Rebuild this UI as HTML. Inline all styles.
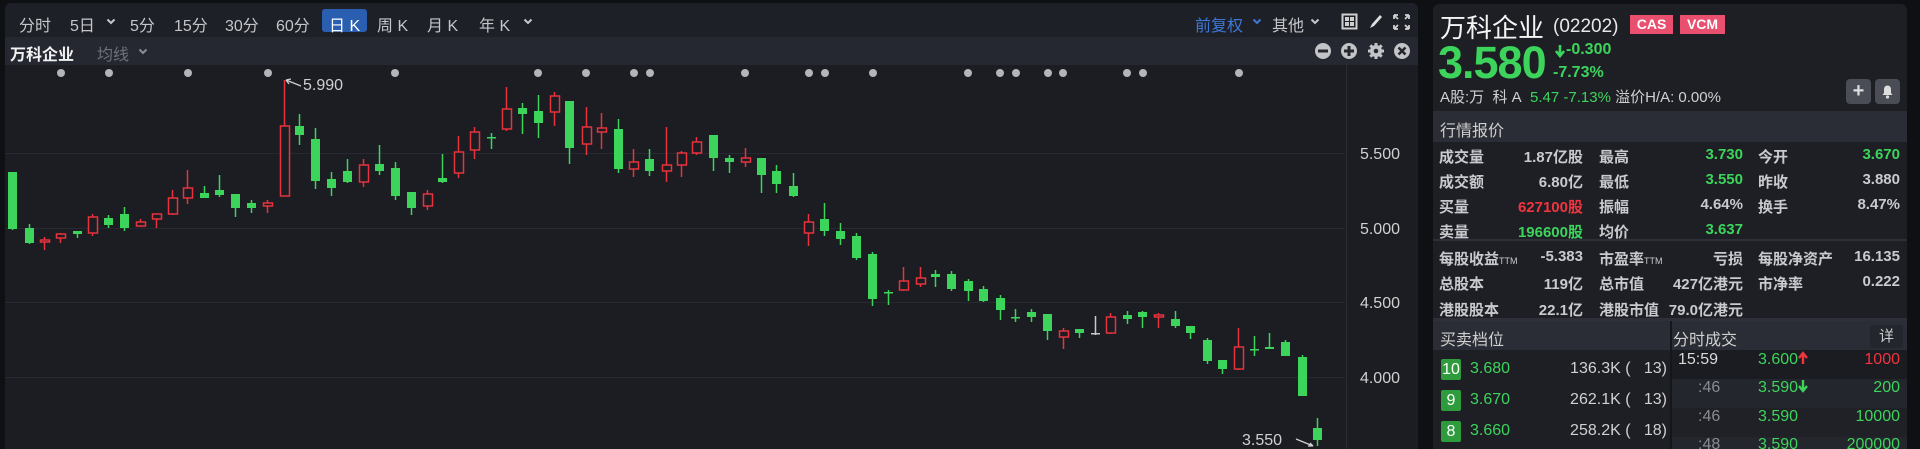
<!DOCTYPE html>
<html><head><meta charset="utf-8">
<style>
*{margin:0;padding:0;box-sizing:border-box}
body{width:1920px;height:449px;background:#0f1013;overflow:hidden;position:relative;font-family:"Liberation Sans","Noto Sans CJK SC",sans-serif;color:#c9cacd}
.a{position:absolute;white-space:nowrap}
.g{color:#3dd45c}.r{color:#f0353f}
#chart{position:absolute;left:5px;top:3px;width:1413px;height:446px;background:#1b1d23;border-radius:6px 6px 0 0;overflow:hidden}
#tb{position:absolute;left:0;top:0;width:1413px;height:34px;background:#1e2027}
#tb2{position:absolute;left:0;top:34px;width:1413px;height:28px;background:#252831}
.tbi{position:absolute;top:9px;font-size:16px;color:#c5c6ca}
.chev{position:absolute;top:15px}
#rp{position:absolute;left:1433px;top:4px;width:474px;height:445px;background:#1d1f25;border-radius:6px 6px 0 0;overflow:hidden}
.hdr{position:absolute;left:0;width:474px;background:#2a2d35}
.t{position:absolute;font-size:15px;font-weight:bold;white-space:nowrap}
.bd{position:absolute;width:20px;height:21px;background:#2e9c3c;color:#fff;font-size:16px;text-align:center;line-height:21px;border-radius:2px}
</style></head><body>
<div id="chart">
 <div id="tb">
  <span class="tbi" style="left:14px">分时</span>
  <span class="tbi" style="left:65px">5日</span><svg class="chev" style="left:101px" width="10" height="7"><path d="M1.5 1.5l3.5 3.5 3.5-3.5" stroke="#c5c6ca" stroke-width="2" fill="none"/></svg>
  <span class="tbi" style="left:125px">5分</span>
  <span class="tbi" style="left:169px">15分</span>
  <span class="tbi" style="left:220px">30分</span>
  <span class="tbi" style="left:271px">60分</span>
  <div class="a" style="left:317px;top:6px;width:45px;height:23px;background:#2a5eb0;border-radius:3px"></div>
  <span class="tbi" style="left:324px;color:#fff">日 K</span>
  <span class="tbi" style="left:372px">周 K</span>
  <span class="tbi" style="left:422px">月 K</span>
  <span class="tbi" style="left:474px">年 K</span><svg class="chev" style="left:518px" width="10" height="7"><path d="M1.5 1.5l3.5 3.5 3.5-3.5" stroke="#c5c6ca" stroke-width="2" fill="none"/></svg>
  <span class="tbi" style="left:1190px;color:#3d78d8">前复权</span><svg class="chev" style="left:1247px" width="10" height="7"><path d="M1.5 1.5l3.5 3.5 3.5-3.5" stroke="#3d78d8" stroke-width="2" fill="none"/></svg>
  <span class="tbi" style="left:1267px">其他</span><svg class="chev" style="left:1305px" width="10" height="7"><path d="M1.5 1.5l3.5 3.5 3.5-3.5" stroke="#c5c6ca" stroke-width="2" fill="none"/></svg>
  <svg class="a" style="left:1336px;top:10px" width="80" height="18" viewBox="0 0 80 18">
   <rect x="1.5" y="1.5" width="14" height="14" fill="none" stroke="#d0d0d0" stroke-width="2"/>
   <rect x="4" y="4" width="4" height="4" fill="#d0d0d0"/><rect x="9" y="4" width="4" height="4" fill="#d0d0d0"/><rect x="4" y="9" width="4" height="4" fill="#d0d0d0"/><rect x="9" y="9" width="4" height="4" fill="#d0d0d0"/>
   <path d="M29 15 L31 11 L39 2 L41 4 L33 13 Z" fill="#e0e0e0"/>
   <path d="M53 2h4M53 2v4M53 2l4 4M68 2h-4M68 2v4M68 2l-4 4M53 16h4M53 16v-4M53 16l4-4M68 16h-4M68 16v-4M68 16l-4-4" stroke="#d0d0d0" stroke-width="1.8" fill="none"/>
  </svg>
 </div>
 <div id="tb2">
  <span class="a" style="left:5px;top:4px;font-size:16px;font-weight:bold;color:#f2f2f2">万科企业</span>
  <span class="a" style="left:92px;top:4px;font-size:16px;color:#6f727a">均线</span><svg class="a" style="left:133px;top:11px" width="10" height="7"><path d="M1.5 1.5l3.5 3.5 3.5-3.5" stroke="#8a8d94" stroke-width="2" fill="none"/></svg>
  <svg class="a" style="left:1309px;top:4px" width="100" height="20" viewBox="0 0 100 20">
   <circle cx="9" cy="10" r="8" fill="#c3c4c8"/><rect x="4" y="8.5" width="10" height="3" fill="#252831"/>
   <circle cx="35" cy="10" r="8" fill="#c3c4c8"/><rect x="30" y="8.5" width="10" height="3" fill="#252831"/><rect x="33.5" y="5" width="3" height="10" fill="#252831"/>
   <g fill="#c3c4c8"><circle cx="62" cy="10" r="6"/><g stroke="#c3c4c8" stroke-width="3"><path d="M62 2v16M54 10h16M56.3 4.3l11.4 11.4M67.7 4.3l-11.4 11.4"/></g></g><circle cx="62" cy="10" r="2.3" fill="#252831"/>
   <circle cx="88" cy="10" r="8" fill="#c3c4c8"/><path d="M84.5 6.5l7 7M91.5 6.5l-7 7" stroke="#252831" stroke-width="2.6"/>
  </svg>
 </div>
 <svg id="cs" class="a" style="left:-5px;top:-3px" width="1413" height="452"></svg>
</div>
<div id="rp">
 <span class="a" style="left:7px;top:4px;font-size:26px;color:#f4f4f4">万科企业</span>
 <span class="a" style="left:120px;top:12px;font-size:19px;color:#e8e8e8">(02202)</span>
 <div class="a" style="left:197px;top:11px;width:43px;height:19px;background:#e94f6f;color:#fff;font-size:14px;font-weight:bold;text-align:center;line-height:19px">CAS</div>
 <div class="a" style="left:247px;top:11px;width:45px;height:19px;background:#e94f6f;color:#fff;font-size:14px;font-weight:bold;text-align:center;line-height:19px">VCM</div>
 <span class="a g" style="left:5px;top:33px;font-size:45px;font-weight:bold;letter-spacing:-1px">3.580</span>
 <svg class="a" style="left:122px;top:40px" width="10" height="14"><path d="M5 1v9M1 7l4 5 4-5" stroke="#3dd45c" stroke-width="2.6" fill="none"/></svg>
 <span class="a g" style="left:133px;top:37px;font-size:16px;font-weight:bold">-0.300</span>
 <span class="a g" style="left:120px;top:60px;font-size:16px;font-weight:bold">-7.73%</span>
 <span class="a" style="left:7px;top:82px;font-size:15px;color:#d0d0d0">A股:万&nbsp; 科 A&nbsp; <span class="g">5.47 -7.13%</span> 溢价H/A: 0.00%</span>
 <div class="a" style="left:413px;top:75px;width:25px;height:25px;background:#4a4d55;border-radius:4px;color:#ddd;font-size:20px;font-weight:bold;text-align:center;line-height:24px">+</div>
 <div class="a" style="left:442px;top:75px;width:25px;height:25px;background:#4a4d55;border-radius:4px"><svg width="25" height="25"><path d="M7.5 16h10l-1.5-2v-4a3.5 3.5 0 0 0-7 0v4z" fill="#ddd"/><circle cx="12.5" cy="18" r="1.6" fill="#ddd"/></svg></div>
 <div class="hdr" style="top:107px;height:31px"></div>
 <span class="a" style="left:7px;top:113px;font-size:16px;color:#cfcfcf">行情报价</span>
 <div class="a" style="left:0;top:235px;width:474px;height:2px;background:#2d3038"></div>
 <div class="a" style="left:0;top:314px;width:474px;height:3px;background:#2d3038"></div>
 <div id="tbl"></div>
 <div class="hdr" style="top:317px;height:29px"></div>
 <div class="a" style="left:237px;top:317px;width:2px;height:130px;background:#15161a"></div>
 <span class="a" style="left:7px;top:322px;font-size:16px;color:#cfcfcf">买卖档位</span>
 <span class="a" style="left:240px;top:322px;font-size:16px;color:#cfcfcf">分时成交</span>
 <div class="a" style="left:437px;top:321px;width:33px;height:23px;background:#23262d;border-radius:3px;color:#ccc;font-size:15px;text-align:center;line-height:23px">详</div>
 <div class="a" style="left:239px;top:346px;width:235px;height:29px;background:#1a1c21"></div>
 <div class="a" style="left:239px;top:375px;width:235px;height:29px;background:#23262c"></div>
 <div class="a" style="left:239px;top:404px;width:235px;height:29px;background:#1f2127"></div>
 <div class="a" style="left:239px;top:433px;width:235px;height:29px;background:#23262c"></div>
</div>
<script>
var s=document.getElementById('cs'),h='';
[153,228,302,377].forEach(function(y){h+='<line x1="5" x2="1345" y1="'+y+'.5" y2="'+y+'.5" stroke="#262931"/>';});
h+='<line x1="1346.5" x2="1346.5" y1="65" y2="449" stroke="#2a2d35"/>';
[['5.500',153],['5.000',228],['4.500',302],['4.000',377]].forEach(function(p){h+='<text x="1400" y="'+(p[1]+6)+'" fill="#d0d0d0" font-size="16" text-anchor="end" font-family="Liberation Sans">'+p[0]+'</text>';});
[61,109,188,268,395,538,586,634,650,745,809,825,873,968,1000,1016,1048,1063,1127,1143,1239].forEach(function(x){h+='<circle cx="'+x+'" cy="73" r="4" fill="#b4b5b8"/>';});
var d=[[12,172,229,172,230,'g'],[29,228,243,224,244,'g'],[44,240,240,237,250,'r'],[60,234,238,233,243,'r'],[77,231,234,231,238,'g'],[92,217,233,214,236,'r'],[108,218,225,215,228,'g'],[124,214,228,207,231,'g'],[140,222,226,219,227,'r'],[156,214,219,214,228,'r'],[172,198,214,190,215,'r'],[187,188,198,170,204,'r'],[204,193,198,186,198,'g'],[219,190,195,175,197,'g'],[235,194,208,194,217,'g'],[251,203,208,200,213,'g'],[267,203,206,200,213,'r'],[284,126,196,80,196,'r'],[299,126,135,114,145,'g'],[315,139,181,128,189,'g'],[331,179,188,172,196,'g'],[347,171,182,159,183,'g'],[363,165,182,159,187,'r'],[379,164,171,145,175,'g'],[395,168,196,162,200,'g'],[411,192,208,192,215,'g'],[427,194,206,190,210,'r'],[442,178,182,154,183,'g'],[458,152,173,136,178,'r'],[474,132,150,127,159,'r'],[491,137,138,133,149,'g'],[506,109,129,87,131,'r'],[522,108,114,103,134,'g'],[538,111,123,95,138,'g'],[554,96,112,92,126,'r'],[569,101,148,101,164,'g'],[586,127,144,107,155,'r'],[601,128,132,113,149,'r'],[618,129,169,119,173,'g'],[633,162,169,149,177,'r'],[649,159,171,149,176,'g'],[666,165,171,127,182,'r'],[681,153,165,151,177,'r'],[696,142,153,137,155,'r'],[713,135,158,135,171,'g'],[729,158,162,155,173,'g'],[745,158,162,148,167,'r'],[761,158,175,158,193,'g'],[776,171,184,165,193,'g'],[793,186,196,173,197,'g'],[808,222,233,214,246,'r'],[824,219,231,203,236,'g'],[840,231,239,223,245,'g'],[856,236,258,233,260,'g'],[872,254,299,252,306,'g'],[888,292,293,290,305,'g'],[903,281,290,267,291,'r'],[920,278,284,267,287,'r'],[935,274,277,270,287,'g'],[951,274,289,271,291,'g'],[968,281,291,279,301,'g'],[983,289,301,286,302,'g'],[1000,298,310,295,320,'g'],[1015,317,318,309,322,'g'],[1031,312,317,309,322,'g'],[1047,314,331,314,340,'g'],[1063,331,337,328,349,'r'],[1079,329,333,329,338,'g'],[1095,333,334,316,335,'w'],[1110,317,333,313,334,'r'],[1127,315,319,311,324,'g'],[1142,312,317,311,328,'g'],[1158,315,317,313,328,'r'],[1175,319,326,311,328,'g'],[1190,326,333,326,339,'g'],[1207,340,361,338,364,'g'],[1222,360,369,360,374,'g'],[1238,347,369,328,370,'r'],[1254,349,350,336,356,'g'],[1269,347,349,333,349,'g'],[1285,342,356,340,356,'g'],[1302,357,396,355,396,'g'],[1317,428,440,418,446,'g']];
d.forEach(function(c){var x=c[0],col=c[5]=='g'?'#3dd45c':c[5]=='r'?'#e8333d':'#c8c8c8';
h+='<line x1="'+(x+.5)+'" x2="'+(x+.5)+'" y1="'+c[3]+'" y2="'+c[4]+'" stroke="'+col+'" stroke-width="1.5"/>';
var bh=Math.max(c[2]-c[1],1.5);
if(c[5]=='r'){h+='<rect x="'+(x-3.5)+'" y="'+c[1]+'" width="9" height="'+Math.max(bh,2)+'" fill="#1b1d23" stroke="'+col+'" stroke-width="1.5"/>';}
else{h+='<rect x="'+(x-4)+'" y="'+c[1]+'" width="9" height="'+bh+'" fill="'+col+'"/>';}});
h+='<path d="M286 80 L301 86 M286 80 l5 -1 M286 80 l3 4" stroke="#cfcfcf" stroke-width="1.3" fill="none"/><text x="303" y="90" fill="#d0d0d0" font-size="16" font-family="Liberation Sans">5.990</text>';
h+='<text x="1242" y="445" fill="#d0d0d0" font-size="16" font-family="Liberation Sans">3.550</text><path d="M1296 439 L1313 446 M1313 446 l-5 0 M1313 446 l-3 -3" stroke="#cfcfcf" stroke-width="1.3" fill="none"/>';
s.innerHTML=h;
var T='',L=function(x,y,txt,cls,right){T+='<span class="t '+(cls||'')+'" style="'+(right?'right:'+(474-x)+'px;text-align:right;':'left:'+x+'px;')+'top:'+(y-9)+'px">'+txt+'</span>';};
var rows=[[151,'成交量','1.87亿股','','最高','3.730','g','今开','3.670','g'],[176,'成交额','6.80亿','','最低','3.550','g','昨收','3.880',''],[201,'买量','627100股','r','振幅','4.64%','','换手','8.47%',''],[226,'卖量','196600股','g','均价','3.637','g','','','']];
rows.forEach(function(r){L(6,r[0],r[1],'',0);L(150,r[0],r[2],r[3],1);L(166,r[0],r[4],'',0);L(310,r[0],r[5],r[6],1);L(325,r[0],r[7],'',0);L(467,r[0],r[8],r[9],1);});
L(6,253,'每股收益<span style="font-size:9px;font-weight:normal">TTM</span>','',0);L(150,253,'-5.383','',1);L(166,253,'市盈率<span style="font-size:9px;font-weight:normal">TTM</span>','',0);L(310,253,'亏损','',1);L(325,253,'每股净资产','',0);L(467,253,'16.135','',1);
L(6,278,'总股本','',0);L(150,278,'119亿','',1);L(166,278,'总市值','',0);L(310,278,'427亿港元','',1);L(325,278,'市净率','',0);L(467,278,'0.222','',1);
L(6,304,'港股股本','',0);L(150,304,'22.1亿','',1);L(166,304,'港股市值','',0);L(310,304,'79.0亿港元','',1);
var up='<svg width="10" height="14" style="vertical-align:-1px"><path d="M5 13V4M1 7l4-5 4 5" stroke="#f0353f" stroke-width="2.4" fill="none"/></svg>';
var dn='<svg width="10" height="14" style="vertical-align:-1px"><path d="M5 1v9M1 7l4 5 4-5" stroke="#3dd45c" stroke-width="2.4" fill="none"/></svg>';
var B='';[[10,365,'3.680','136.3K (&nbsp;&nbsp; 13)'],[9,396,'3.670','262.1K (&nbsp;&nbsp; 13)'],[8,427,'3.660','258.2K (&nbsp;&nbsp; 18)']].forEach(function(b){
B+='<div class="bd" style="left:8px;top:'+(b[1]-10)+'px">'+b[0]+'</div><span class="a g" style="left:37px;top:'+(b[1]-9)+'px;font-size:16px">'+b[2]+'</span><span class="a" style="right:240px;top:'+(b[1]-9)+'px;font-size:16px;color:#d0d0d0">'+b[3]+'</span>';});
[[356,'15:59','3.600'+up,'1000','r','#d8d8d8'],[384,':46','3.590'+dn,'200','g','#8a8c91'],[413,':46','3.590','10000','g','#8a8c91'],[441,':48','3.590','200000','g','#8a8c91']].forEach(function(r){
B+='<span class="a" style="left:'+(r[1].length>3?245:265)+'px;top:'+(r[0]-9)+'px;font-size:16px;color:'+r[5]+';z-index:2">'+r[1]+'</span><span class="a g" style="left:325px;top:'+(r[0]-9)+'px;font-size:16px;z-index:2">'+r[2]+'</span><span class="a '+r[4]+'" style="right:7px;top:'+(r[0]-9)+'px;font-size:16px;z-index:2">'+r[3]+'</span>';});
document.getElementById('tbl').outerHTML='<div>'+T+'</div>';
document.getElementById('rp').insertAdjacentHTML('beforeend',B);
</script>
</body></html>
